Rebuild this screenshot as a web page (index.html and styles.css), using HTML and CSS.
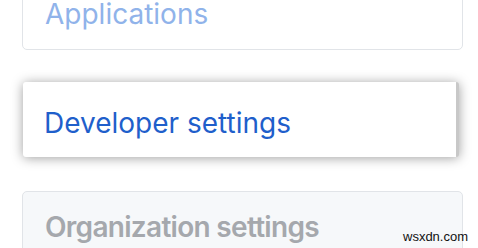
FILE: index.html
```html
<html lang="en">
<head>
  <meta charset="UTF-8">
  <title>Settings</title>
  <link rel="stylesheet" href="styles.css">
</head>
<body>

<div class="menu">
  <div class="box faded">
    <a class="item">Applications</a>
  </div>

  <div class="box raised">
    <a class="item">Developer settings</a>
  </div>

  <div class="box muted">
    <span class="item">Organization settings</span>
  </div>
</div>

<div class="mark">wsxdn.com</div>

</body>
</html>
```

FILE: styles.css
```css
body {
  margin: 0;
  padding: 0;
  background-color: white;
  font-family: Inter, "Liberation Sans", sans-serif;
  overflow: hidden;
}

.menu {
  display: flex;
  flex-direction: column;
  margin-top: -22px;
  padding-left: 22px;
  width: 441px;
}

.box {
  border: 1px solid #e1e4e8;
  border-radius: 5px;
  padding: 21px 22px;
  background: white;
}

.item {
  display: block;
  font-size: 28px;
  line-height: 28px;
}

.faded .item {
  color: #90b3ea;
}

.raised {
  margin: 32px 4px 0 1px;
  padding: 27px 22px 20px 21px;
  border: none;
  border-right: 3px solid #c8c8c8;
  border-radius: 3px;
  box-shadow: 0 1px 12px rgba(0,0,0,0.38);
}

.raised .item {
  color: #1f5fcb;
}

.muted {
  margin-top: 34px;
  background: #f6f8fa;
  height: 60px;
}

.muted .item {
  color: #a5a8ad;
  font-weight: 600;
  letter-spacing: -0.7px;
}

.mark {
  position: absolute;
  left: 403px;
  top: 229px;
  font-family: "Liberation Sans", Arial, sans-serif;
  font-size: 13px;
  color: #111;
}
```
